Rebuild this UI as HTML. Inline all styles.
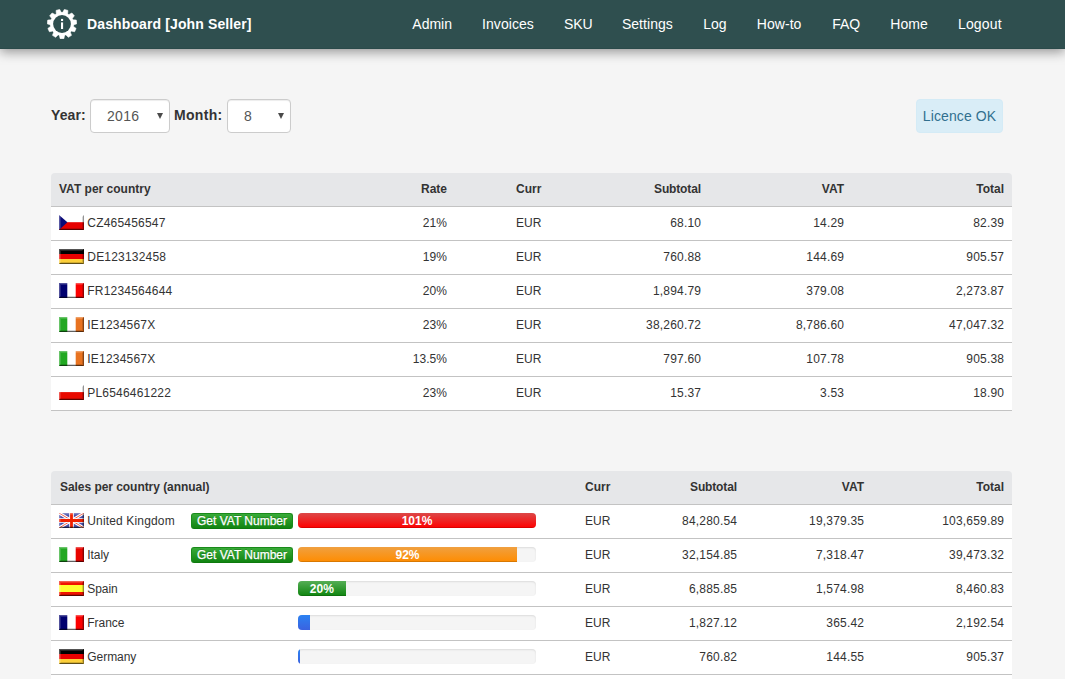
<!DOCTYPE html>
<html lang="en">
<head>
<meta charset="utf-8">
<title>Dashboard [John Seller]</title>
<style>
*{box-sizing:border-box}
html,body{margin:0;padding:0}
body{width:1065px;height:679px;overflow:hidden;background:#f5f5f5;color:#333;font-family:"Liberation Sans",sans-serif;font-size:14px;line-height:20px;position:relative}
.navbar{position:absolute;left:0;top:0;width:1065px;height:49px;background:#2f4f4f;border-bottom:1px solid #2a4a4a;box-shadow:0 3px 11px rgba(0,0,0,.4);color:#fff}
.gear{position:absolute;left:47px;top:9px}
.brand{position:absolute;left:87px;top:14px;font-weight:bold;font-size:14px;line-height:20px;white-space:nowrap;letter-spacing:.12px}
.nav{position:absolute;left:0;top:0;margin:0;padding:0;list-style:none}
.nav li{position:absolute;top:14px;font-size:14px;line-height:20px;white-space:nowrap}
.nav a{color:#fff}
.filters{position:absolute;left:51px;top:99px;width:961px;height:34px}
.filters label{position:absolute;top:6px;font-weight:bold;line-height:20px}
.l-year{left:0;letter-spacing:.1px}
.l-month{left:123px;letter-spacing:.3px}
.select{position:absolute;top:0;height:34px;border:1px solid #ccc;border-radius:4px;background:#fff;color:#555;box-shadow:inset 0 1px 1px rgba(0,0,0,.075)}
.select span{position:absolute;left:16px;top:6px;line-height:20px;letter-spacing:.3px}
.select i{position:absolute;right:6px;top:13px;width:0;height:0;border-left:3.5px solid transparent;border-right:3.5px solid transparent;border-top:6px solid #4a4a4a}
.s-year{left:39px;width:80px}
.s-month{left:176px;width:64px}
.alert{position:absolute;left:865px;top:0;width:87px;height:34px;padding:6px 0;text-align:center;letter-spacing:.1px;background:#d9edf7;border:1px solid #d4ebf6;border-radius:4px;color:#31708f}
.tbl{position:absolute;left:51px;width:961px;border-collapse:separate;border-spacing:0;table-layout:fixed;font-size:12px;line-height:17px}
.t1{top:173px}
.t2{top:471px}
.tbl th,.tbl td{height:34px;padding:8px 8px 8px 8px;border-bottom:1px solid #c3c3c3;text-align:left;vertical-align:middle;white-space:nowrap;overflow:hidden}
.tbl th{background:#e6e7e9;font-weight:bold}
.tbl td{background:#fff}
.tbl th:first-child{border-top-left-radius:4px}
.tbl th:last-child{border-top-right-radius:4px}
.tbl .r{text-align:right}
.tbl td.r{letter-spacing:.2px;padding-right:7.8px}
.tbl td.rate{letter-spacing:.05px;padding-right:8px}
.tbl th.c-sub{letter-spacing:-.15px;padding-right:8.15px}
.flag{display:inline-block;vertical-align:top;margin:0 3.3px 0 0}
.nm{display:inline-block;vertical-align:top;letter-spacing:.2px}
.t2 .nm{letter-spacing:-.05px}
.t2 .nm.uk{letter-spacing:.15px}
.t1 .c-name{width:300px}
.t1 .c-rate{width:104px}
.t1 .c-curr{padding-left:61px}
.t1 th.c-curr{width:140px}
.t1 .c-sub{width:114px}
.t1 .c-vat{width:143px}
.t1 .c-tot{width:160px}
.t2 th.c-name{padding-left:9px;letter-spacing:-.05px}
.t2 td.c-btn{padding:8px 0 0;vertical-align:top}
.t2 td.c-bar{padding:8px 5px 0;vertical-align:top}
.t2 th.c-curr{width:90px}
.t2 .c-curr{padding-left:44px}
.t2 .c-sub{width:114px}
.t2 .c-vat{width:127px}
.t2 .c-tot{width:140px}
.btn{display:block;width:102px;height:16px;margin-top:0;border:1px solid #1a8a1a;border-bottom-color:#0e7a0e;border-radius:3px;background:linear-gradient(#38ab38,#128412);color:#fff;font-size:12px;line-height:14px;text-align:center;text-shadow:0 -1px 0 rgba(0,0,0,.2);-webkit-text-stroke:.25px #fff}
.progress{height:15px;width:238px;background:#f5f5f5;border-radius:4px;overflow:hidden;box-shadow:inset 0 1px 2px rgba(0,0,0,.1)}
.bar{height:15px;color:#fff;font-size:12px;font-weight:bold;line-height:17px;text-align:center;box-shadow:inset 0 -1px 0 rgba(0,0,0,.15)}
.bar.red{background:linear-gradient(#dc4848,#ff0000)}
.bar.orange{background:linear-gradient(#f0a040,#ff8c00)}
.bar.green{background:linear-gradient(#55ae55,#0e840e)}
.bar.blue{background:linear-gradient(#2b82f2,#3b62e0);box-shadow:none}
</style>
</head>
<body>
<div class="navbar">
 <svg class="gear" width="30" height="30" viewBox="0 0 30 30"><path d="M17.65 26.09 L16.85 29.68 L13.15 29.68 L12.35 26.09 L11.24 25.76 L8.61 28.35 L5.51 26.36 L6.77 22.89 L6.02 22.02 L2.41 22.78 L0.88 19.42 L3.81 17.19 L3.65 16.05 L0.20 14.74 L0.73 11.08 L4.40 10.79 L4.88 9.75 L2.69 6.78 L5.11 3.99 L8.36 5.73 L9.33 5.11 L9.09 1.43 L12.63 0.39 L14.42 3.61 L15.58 3.61 L17.37 0.39 L20.91 1.43 L20.67 5.11 L21.64 5.73 L24.89 3.99 L27.31 6.78 L25.12 9.75 L25.60 10.79 L29.27 11.08 L29.80 14.74 L26.35 16.05 L26.19 17.19 L29.12 19.42 L27.59 22.78 L23.98 22.02 L23.23 22.89 L24.49 26.36 L21.39 28.35 L18.76 25.76Z" fill="#fff" stroke="#fff" stroke-width=".6" stroke-linejoin="round"/><circle cx="15" cy="15" r="11.6" fill="#fff"/><circle cx="15" cy="15" r="8.9" fill="#2f4f4f"/><rect x="14" y="13.4" width="2.1" height="6.6" fill="#fff"/><rect x="14" y="9.9" width="2.1" height="2.1" fill="#fff"/></svg>
 <a class="brand">Dashboard [John Seller]</a>
 <ul class="nav">
  <li style="left:412.3px"><a>Admin</a></li>
  <li style="left:482.1px;letter-spacing:0.05px"><a>Invoices</a></li>
  <li style="left:563.9px"><a>SKU</a></li>
  <li style="left:621.9px;letter-spacing:0.05px"><a>Settings</a></li>
  <li style="left:703.2px"><a>Log</a></li>
  <li style="left:756.8px;letter-spacing:0.05px"><a>How-to</a></li>
  <li style="left:832.2px"><a>FAQ</a></li>
  <li style="left:890.3px;letter-spacing:0.05px"><a>Home</a></li>
  <li style="left:957.9px;letter-spacing:0.2px"><a>Logout</a></li>
 </ul>
</div>
<div class="filters">
 <label class="l-year">Year:</label>
 <div class="select s-year"><span>2016</span><i></i></div>
 <label class="l-month">Month:</label>
 <div class="select s-month"><span>8</span><i></i></div>
 <div class="alert">Licence OK</div>
</div>
<table class="tbl t1">
 <thead>
  <tr><th class="c-name">VAT per country</th><th class="c-rate r">Rate</th><th class="c-curr">Curr</th><th class="c-sub r">Subtotal</th><th class="c-vat r">VAT</th><th class="c-tot r">Total</th></tr>
 </thead>
 <tbody>
  <tr><td class="c-name"><svg class="flag" width="25" height="15" viewBox="0 0 25 15"><rect width="25" height="15" fill="#fff"/><rect y="7.2" width="25" height="7.8" fill="#e60000"/><path d="M0 0L8.4 7.3L0 15Z" fill="#0a0a78"/><path d="M0 0H25L24 1H1V14L0 15Z" fill="#fff" fill-opacity=".32"/><path d="M1 1H24L23 2H2V13L1 14Z" fill="#fff" fill-opacity=".14"/><path d="M25 0V15L24 14V1Z" fill="#000" fill-opacity=".42"/><path d="M0 15H25L24 14H1Z" fill="#000" fill-opacity=".62"/><path d="M24 1V14H1L2 13H23V2Z" fill="#000" fill-opacity=".16"/></svg><span class="nm">CZ465456547</span></td><td class="r rate">21%</td><td class="c-curr">EUR</td><td class="r">68.10</td><td class="r">14.29</td><td class="r">82.39</td></tr>
  <tr><td class="c-name"><svg class="flag" width="25" height="15" viewBox="0 0 25 15"><rect width="25" height="15" fill="#000"/><rect y="5" width="25" height="5" fill="#e80000"/><rect y="10" width="25" height="5" fill="#fccf3a"/><path d="M0 0H25L24 1H1V14L0 15Z" fill="#fff" fill-opacity=".32"/><path d="M1 1H24L23 2H2V13L1 14Z" fill="#fff" fill-opacity=".14"/><path d="M25 0V15L24 14V1Z" fill="#000" fill-opacity=".42"/><path d="M0 15H25L24 14H1Z" fill="#000" fill-opacity=".62"/><path d="M24 1V14H1L2 13H23V2Z" fill="#000" fill-opacity=".16"/></svg><span class="nm">DE123132458</span></td><td class="r rate">19%</td><td class="c-curr">EUR</td><td class="r">760.88</td><td class="r">144.69</td><td class="r">905.57</td></tr>
  <tr><td class="c-name"><svg class="flag" width="25" height="15" viewBox="0 0 25 15"><rect width="25" height="15" fill="#fff"/><rect width="8.3" height="15" fill="#00006e"/><rect x="16.7" width="8.3" height="15" fill="#fb0000"/><path d="M0 0H25L24 1H1V14L0 15Z" fill="#fff" fill-opacity=".32"/><path d="M1 1H24L23 2H2V13L1 14Z" fill="#fff" fill-opacity=".14"/><path d="M25 0V15L24 14V1Z" fill="#000" fill-opacity=".42"/><path d="M0 15H25L24 14H1Z" fill="#000" fill-opacity=".62"/><path d="M24 1V14H1L2 13H23V2Z" fill="#000" fill-opacity=".16"/></svg><span class="nm">FR1234564644</span></td><td class="r rate">20%</td><td class="c-curr">EUR</td><td class="r">1,894.79</td><td class="r">379.08</td><td class="r">2,273.87</td></tr>
  <tr><td class="c-name"><svg class="flag" width="25" height="15" viewBox="0 0 25 15"><rect width="25" height="15" fill="#fff"/><rect width="8.3" height="15" fill="#22a822"/><rect x="16.7" width="8.3" height="15" fill="#e87320"/><path d="M0 0H25L24 1H1V14L0 15Z" fill="#fff" fill-opacity=".32"/><path d="M1 1H24L23 2H2V13L1 14Z" fill="#fff" fill-opacity=".14"/><path d="M25 0V15L24 14V1Z" fill="#000" fill-opacity=".42"/><path d="M0 15H25L24 14H1Z" fill="#000" fill-opacity=".62"/><path d="M24 1V14H1L2 13H23V2Z" fill="#000" fill-opacity=".16"/></svg><span class="nm">IE1234567X</span></td><td class="r rate">23%</td><td class="c-curr">EUR</td><td class="r">38,260.72</td><td class="r">8,786.60</td><td class="r">47,047.32</td></tr>
  <tr><td class="c-name"><svg class="flag" width="25" height="15" viewBox="0 0 25 15"><rect width="25" height="15" fill="#fff"/><rect width="8.3" height="15" fill="#22a822"/><rect x="16.7" width="8.3" height="15" fill="#e87320"/><path d="M0 0H25L24 1H1V14L0 15Z" fill="#fff" fill-opacity=".32"/><path d="M1 1H24L23 2H2V13L1 14Z" fill="#fff" fill-opacity=".14"/><path d="M25 0V15L24 14V1Z" fill="#000" fill-opacity=".42"/><path d="M0 15H25L24 14H1Z" fill="#000" fill-opacity=".62"/><path d="M24 1V14H1L2 13H23V2Z" fill="#000" fill-opacity=".16"/></svg><span class="nm">IE1234567X</span></td><td class="r rate">13.5%</td><td class="c-curr">EUR</td><td class="r">797.60</td><td class="r">107.78</td><td class="r">905.38</td></tr>
  <tr><td class="c-name"><svg class="flag" width="25" height="15" viewBox="0 0 25 15"><rect width="25" height="15" fill="#fff"/><rect y="7.1" width="25" height="7.9" fill="#e80a00"/><path d="M0 0H25L24 1H1V14L0 15Z" fill="#fff" fill-opacity=".32"/><path d="M1 1H24L23 2H2V13L1 14Z" fill="#fff" fill-opacity=".14"/><path d="M25 0V15L24 14V1Z" fill="#000" fill-opacity=".42"/><path d="M0 15H25L24 14H1Z" fill="#000" fill-opacity=".62"/><path d="M24 1V14H1L2 13H23V2Z" fill="#000" fill-opacity=".16"/></svg><span class="nm">PL6546461222</span></td><td class="r rate">23%</td><td class="c-curr">EUR</td><td class="r">15.37</td><td class="r">3.53</td><td class="r">18.90</td></tr>
 </tbody>
</table>
<table class="tbl t2">
 <colgroup><col style="width:140px"><col style="width:102px"><col style="width:248px"><col style="width:90px"><col style="width:114px"><col style="width:127px"><col style="width:140px"></colgroup>
 <thead>
  <tr><th class="c-name" colspan="3">Sales per country (annual)</th><th class="c-curr">Curr</th><th class="c-sub r">Subtotal</th><th class="c-vat r">VAT</th><th class="c-tot r">Total</th></tr>
 </thead>
 <tbody>
  <tr><td class="c-name"><svg class="flag" width="25" height="15" viewBox="0 0 25 15"><rect width="25" height="15" fill="#4a50aa"/><path d="M0 0L25 15M25 0L0 15" stroke="#fff" stroke-width="3"/><path d="M0 0L25 15M25 0L0 15" stroke="#f2604c" stroke-width="1"/><path d="M12.5 0V15M0 7.5H25" stroke="#fff" stroke-width="4.6"/><path d="M12.5 0V15M0 7.5H25" stroke="#f02000" stroke-width="2.8"/><path d="M0 0H25L24 1H1V14L0 15Z" fill="#fff" fill-opacity=".32"/><path d="M1 1H24L23 2H2V13L1 14Z" fill="#fff" fill-opacity=".14"/><path d="M25 0V15L24 14V1Z" fill="#000" fill-opacity=".42"/><path d="M0 15H25L24 14H1Z" fill="#000" fill-opacity=".62"/><path d="M24 1V14H1L2 13H23V2Z" fill="#000" fill-opacity=".16"/></svg><span class="nm uk">United Kingdom</span></td><td class="c-btn"><span class="btn">Get VAT Number</span></td><td class="c-bar"><div class="progress"><div class="bar red" style="width:100%">101%</div></div></td><td class="c-curr">EUR</td><td class="r">84,280.54</td><td class="r">19,379.35</td><td class="r">103,659.89</td></tr>
  <tr><td class="c-name"><svg class="flag" width="25" height="15" viewBox="0 0 25 15"><rect width="25" height="15" fill="#fff"/><rect width="8.3" height="15" fill="#22a822"/><rect x="16.7" width="8.3" height="15" fill="#e80400"/><path d="M0 0H25L24 1H1V14L0 15Z" fill="#fff" fill-opacity=".32"/><path d="M1 1H24L23 2H2V13L1 14Z" fill="#fff" fill-opacity=".14"/><path d="M25 0V15L24 14V1Z" fill="#000" fill-opacity=".42"/><path d="M0 15H25L24 14H1Z" fill="#000" fill-opacity=".62"/><path d="M24 1V14H1L2 13H23V2Z" fill="#000" fill-opacity=".16"/></svg><span class="nm">Italy</span></td><td class="c-btn"><span class="btn">Get VAT Number</span></td><td class="c-bar"><div class="progress"><div class="bar orange" style="width:92%">92%</div></div></td><td class="c-curr">EUR</td><td class="r">32,154.85</td><td class="r">7,318.47</td><td class="r">39,473.32</td></tr>
  <tr><td class="c-name"><svg class="flag" width="25" height="15" viewBox="0 0 25 15"><rect width="25" height="15" fill="#f01400"/><rect y="4" width="25" height="7" fill="#ffff30"/><path d="M0 0H25L24 1H1V14L0 15Z" fill="#fff" fill-opacity=".32"/><path d="M1 1H24L23 2H2V13L1 14Z" fill="#fff" fill-opacity=".14"/><path d="M25 0V15L24 14V1Z" fill="#000" fill-opacity=".42"/><path d="M0 15H25L24 14H1Z" fill="#000" fill-opacity=".62"/><path d="M24 1V14H1L2 13H23V2Z" fill="#000" fill-opacity=".16"/></svg><span class="nm">Spain</span></td><td class="c-btn"></td><td class="c-bar"><div class="progress"><div class="bar green" style="width:20%">20%</div></div></td><td class="c-curr">EUR</td><td class="r">6,885.85</td><td class="r">1,574.98</td><td class="r">8,460.83</td></tr>
  <tr><td class="c-name"><svg class="flag" width="25" height="15" viewBox="0 0 25 15"><rect width="25" height="15" fill="#fff"/><rect width="8.3" height="15" fill="#00006e"/><rect x="16.7" width="8.3" height="15" fill="#fb0000"/><path d="M0 0H25L24 1H1V14L0 15Z" fill="#fff" fill-opacity=".32"/><path d="M1 1H24L23 2H2V13L1 14Z" fill="#fff" fill-opacity=".14"/><path d="M25 0V15L24 14V1Z" fill="#000" fill-opacity=".42"/><path d="M0 15H25L24 14H1Z" fill="#000" fill-opacity=".62"/><path d="M24 1V14H1L2 13H23V2Z" fill="#000" fill-opacity=".16"/></svg><span class="nm">France</span></td><td class="c-btn"></td><td class="c-bar"><div class="progress"><div class="bar blue" style="width:5%"></div></div></td><td class="c-curr">EUR</td><td class="r">1,827.12</td><td class="r">365.42</td><td class="r">2,192.54</td></tr>
  <tr><td class="c-name"><svg class="flag" width="25" height="15" viewBox="0 0 25 15"><rect width="25" height="15" fill="#000"/><rect y="5" width="25" height="5" fill="#e80000"/><rect y="10" width="25" height="5" fill="#fccf3a"/><path d="M0 0H25L24 1H1V14L0 15Z" fill="#fff" fill-opacity=".32"/><path d="M1 1H24L23 2H2V13L1 14Z" fill="#fff" fill-opacity=".14"/><path d="M25 0V15L24 14V1Z" fill="#000" fill-opacity=".42"/><path d="M0 15H25L24 14H1Z" fill="#000" fill-opacity=".62"/><path d="M24 1V14H1L2 13H23V2Z" fill="#000" fill-opacity=".16"/></svg><span class="nm">Germany</span></td><td class="c-btn"></td><td class="c-bar"><div class="progress"><div class="bar blue" style="width:0.9%"></div></div></td><td class="c-curr">EUR</td><td class="r">760.82</td><td class="r">144.55</td><td class="r">905.37</td></tr>
  <tr><td class="c-name"></td><td class="c-btn"></td><td class="c-bar"></td><td class="c-curr"></td><td class="r"></td><td class="r"></td><td class="r"></td></tr>
 </tbody>
</table>
</body>
</html>
